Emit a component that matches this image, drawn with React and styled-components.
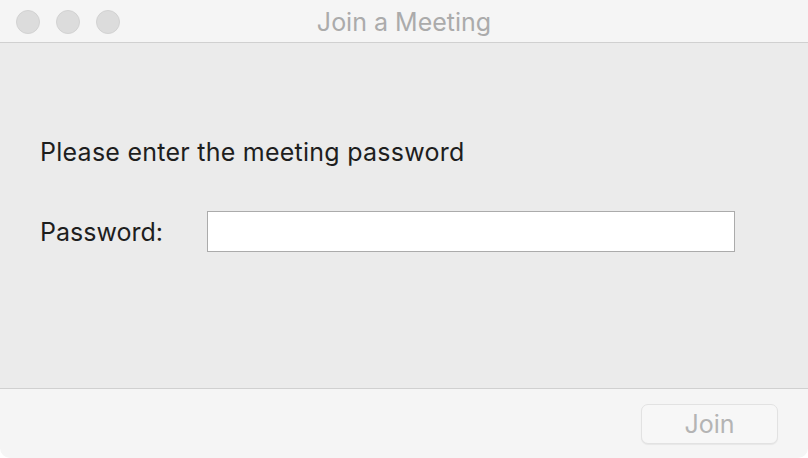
import styled, { createGlobalStyle } from "styled-components"

const Global = createGlobalStyle`
    html, body { margin: 0; padding: 0; background: #ffffff; }
    body { font-family: "Inter", "Liberation Sans", Arial, sans-serif; }
`

const Window = styled.div`
    width: 808px;
    height: 458px;
    display: flex;
    flex-direction: column;
    background: #f5f5f5;
    border-radius: 0 0 10px 10px;
    overflow: hidden;
`

const TitleBar = styled.div`
    height: 42px;
    flex-shrink: 0;
    position: relative;
    display: flex;
    align-items: center;
    justify-content: center;
    background: #f5f5f5;
    border-bottom: 1px solid #d0d0d0;
`

// traffic lights sit over the title bar, greyed out (window not focused)
const Lights = styled.div`
    position: absolute;
    left: 16px;
    top: 10px;
    display: flex;
    gap: 16px;
`

const Light = styled.span`
    width: 24px;
    height: 24px;
    border-radius: 50%;
    background: #dcdcdc;
    border: 1px solid #d2d2d2;
    box-sizing: border-box;
`

const Title = styled.div`
    font-size: 25px;
    color: #ababab;
    margin-top: 2px;
`

const Body = styled.div`
    flex: 1;
    background: #ebebeb;
    padding: 94px 0 0 40px;
    display: flex;
    flex-direction: column;
    border-bottom: 1px solid #d0d0d0;
`

const Prompt = styled.div`
    font-size: 25px;
    letter-spacing: 0.25px;
    color: #1e1e1e;
    line-height: 30px;
`

const Row = styled.div`
    margin-top: 44px;
    display: flex;
    align-items: center;
`

const Label = styled.label`
    width: 167px;
    font-size: 25px;
    color: #1e1e1e;
`

const Input = styled.input`
    width: 528px;
    height: 41px;
    box-sizing: border-box;
    border: 1px solid #ababab;
    background: #ffffff;
    outline: none;
    font-size: 20px;
`

const Footer = styled.div`
    height: 69px;
    flex-shrink: 0;
    display: flex;
    align-items: center;
    justify-content: flex-end;
    padding-right: 30px;
`

const JoinButton = styled.button`
    width: 137px;
    height: 40px;
    margin-top: 1px;
    border-radius: 7px;
    border: 1px solid #e2e2e2;
    background: #f7f7f7;
    color: #b4b4b4;
    font-family: inherit;
    font-size: 25px;
    box-shadow: 0 1px 1px rgba(0, 0, 0, 0.06);
`

export default function App() {
    return (
        <>
            <Global />
            <Window>
                <TitleBar>
                    <Lights>
                        <Light />
                        <Light />
                        <Light />
                    </Lights>
                    <Title>Join a Meeting</Title>
                </TitleBar>
                <Body>
                    <Prompt>Please enter the meeting password</Prompt>
                    <Row>
                        <Label>Password:</Label>
                        <Input type="password" />
                    </Row>
                </Body>
                <Footer>
                    <JoinButton disabled>Join</JoinButton>
                </Footer>
            </Window>
        </>
    )
}
